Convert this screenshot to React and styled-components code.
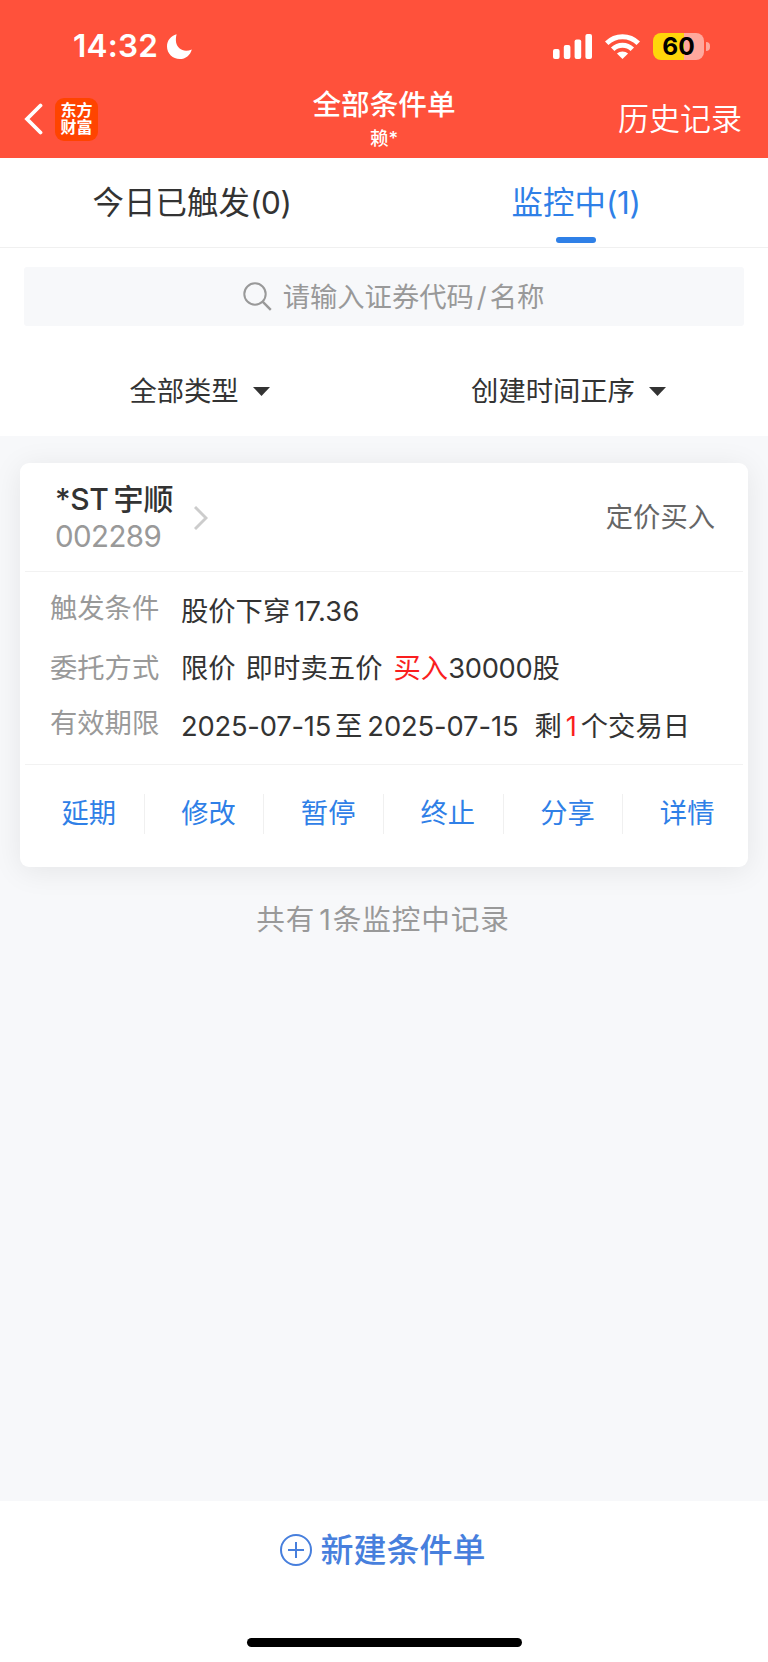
import React from 'react';
import styled, { createGlobalStyle } from 'styled-components';

const GlobalStyle = createGlobalStyle`
  * { box-sizing: border-box; }
  body {
    margin: 0;
    background: #fff;
    color: #333;
    font-family: Inter, "Noto Sans CJK SC", sans-serif;
  }
`;

const Screen = styled.div`
  width: 768px;
  height: 1662px;
  display: flex;
  flex-direction: column;
  white-space: nowrap;
  overflow: hidden;
`;

const Header = styled.header`
  height: 158px;
  background: #ff513b;
  color: #fff;
  display: flex;
  flex-direction: column;
`;

const StatusBar = styled.div`
  height: 80px;
  padding: 12px 58px 0 73px;
  display: flex;
  align-items: center;
  justify-content: space-between;
`;

const StatusGroup = styled.div`
  display: flex;
  align-items: center;
  gap: ${(p) => p.$gap}px;
`;

const Clock = styled.span`
  font-size: 31.5px;
  line-height: 40px;
  font-weight: 600;
  letter-spacing: 0.2px;
`;

const Battery = styled.div`
  display: flex;
  align-items: center;
  gap: 2px;
`;

const BatteryBody = styled.div`
  width: 51px;
  height: 27px;
  border-radius: 8px;
  background: linear-gradient(90deg, #ffd60a 0 60%, #ffa89d 60% 100%);
  color: #000;
  font-size: 24.5px;
  font-weight: 700;
  line-height: 26px;
  text-align: center;
`;

const BatteryTip = styled.div`
  width: 4px;
  height: 9px;
  border-radius: 0 5px 5px 0;
  background: #ffa89d;
`;

const NavBar = styled.div`
  height: 78px;
  display: grid;
  grid-template-columns: 1fr 200px 1fr;
  padding: 0 24px;
`;

const NavLeft = styled.div`
  height: 78px;
  display: flex;
  align-items: center;
  gap: 12px;
`;

const AppBadge = styled.div`
  width: 43px;
  height: 43px;
  border-radius: 9px;
  background: #ff4400;
  display: flex;
  flex-direction: column;
  align-items: center;
  justify-content: center;
  font-size: 16px;
  line-height: 17.5px;
  font-weight: 700;
`;

const NavTitle = styled.div`
  text-align: center;
`;

const Title = styled.h1`
  margin: 6px 0 0;
  font-size: 28.6px;
  font-weight: 500;
  line-height: 38px;
`;

const Account = styled.div`
  font-size: 18.5px;
  font-weight: 500;
  line-height: 24px;
  margin-top: 2px;
`;

const HistoryLink = styled.div`
  height: 78px;
  padding-right: 2px;
  line-height: 77px;
  text-align: right;
  font-size: 31px;
  font-weight: 350;
`;

const Tabs = styled.nav`
  height: 90px;
  border-bottom: 1px solid #f0f0f0;
  display: grid;
  grid-template-columns: 1fr 1fr;
`;

const Tab = styled.div`
  display: flex;
  flex-direction: column;
  align-items: center;
  padding-top: 23px;
  font-size: 31.4px;
  line-height: 44px;
  letter-spacing: 0.1px;
  color: ${(p) => (p.$active ? '#2f80e7' : '#333')};
`;

const TabCount = styled.span`
  letter-spacing: -0.4px;
`;

const TabMark = styled.div`
  width: 40px;
  height: 6px;
  margin-top: 12px;
  border-radius: 3px;
  background: #2f80e7;
`;

const SearchBox = styled.div`
  height: 59px;
  margin: 19px 24px 0;
  padding-left: 19px;
  border-radius: 3px;
  background: #f7f8fa;
  color: #999;
  display: flex;
  align-items: center;
  justify-content: center;
  gap: 11px;
  font-size: 27.3px;
`;

const Placeholder = styled.span`
  padding-bottom: 3px;
`;

const Filters = styled.div`
  height: 110px;
  display: grid;
  grid-template-columns: 1fr 1fr;
  padding-bottom: 20px;
`;

const Filter = styled.div`
  display: flex;
  align-items: flex-end;
  justify-content: center;
  gap: 14px;
  padding: 0 ${(p) => p.$right}px 0 ${(p) => p.$left}px;
  font-size: 27.3px;
  line-height: 48px;
  svg { margin-bottom: 20px; }
`;

const List = styled.main`
  height: 1065px;
  padding-top: 27px;
  background: #f7f8fa;
`;

const Card = styled.article`
  height: 404px;
  margin: 0 20px;
  padding: 0 5px;
  border-radius: 9px;
  background: #fff;
  box-shadow: 0 4px 30px rgba(0, 0, 0, 0.08);
`;

const CardHead = styled.div`
  height: 109px;
  padding: 2px 28px 0 30px;
  border-bottom: 1px solid #f2f2f2;
  display: flex;
  align-items: center;
`;

const Stock = styled.div`
  margin-right: 21px;
`;

const StockName = styled.div`
  font-size: 30px;
  font-weight: 500;
  line-height: 38px;
  letter-spacing: -0.4px;
  margin-top: -3px;
`;

const StockCode = styled.div`
  font-size: 29.5px;
  line-height: 36px;
  letter-spacing: -0.6px;
  color: #999;
`;

const OrderType = styled.div`
  margin-left: auto;
  font-size: 27.3px;
  color: #666;
  line-height: 40px;
`;

const Details = styled.div`
  height: 193px;
  padding: 17px 25px 0;
  border-bottom: 1px solid #f2f2f2;
`;

const Detail = styled.div`
  height: ${(p) => p.$height}px;
  display: flex;
  font-size: 27.3px;
  line-height: 40px;
`;

const Label = styled.div`
  width: 131px;
  color: #999;
`;

const Value = styled.div`
  padding-top: ${(p) => p.$drop || 0}px;
`;

const Num = styled.span`
  margin-left: ${(p) => p.$before || 0}px;
  margin-right: ${(p) => p.$after || 0}px;
  letter-spacing: ${(p) => p.$track || 0}px;
`;

const Red = styled.span`
  color: #fa1e1e;
  margin-left: ${(p) => p.$before || 0}px;
  margin-right: ${(p) => p.$after || 0}px;
`;

const Actions = styled.div`
  display: grid;
  grid-template-columns: repeat(6, 1fr);
  padding-top: 29px;
`;

const Action = styled.div`
  height: 40px;
  padding-left: 9px;
  border-right: 1px solid ${(p) => (p.$last ? 'transparent' : '#f0f0f0')};
  text-align: center;
  font-size: 27.3px;
  line-height: 40px;
  color: #2f80e7;
`;

const Summary = styled.div`
  margin-top: 33px;
  padding-right: 2px;
  line-height: 40px;
  text-align: center;
  font-size: 28.6px;
  letter-spacing: 0.9px;
  color: #999;
`;

const Footer = styled.footer`
  flex: 1;
  background: #fff;
  display: flex;
  flex-direction: column;
  align-items: center;
`;

const CreateButton = styled.div`
  height: 50px;
  margin: 24px 0 63px;
  padding-right: 3px;
  display: flex;
  align-items: center;
  gap: 9px;
  color: #477fdd;
  font-size: 33px;
  font-weight: 500;
`;

const CreateText = styled.span`
  padding-bottom: 5px;
`;

const HomeIndicator = styled.div`
  width: 275px;
  height: 9px;
  border-radius: 5px;
  background: #000;
`;

const Moon = () => (
  <svg width="25" height="25" viewBox="0 0 25 25" fill="#fff">
    <path d="M9.6 0.3C8 6.8 9.2 11.5 12.4 14.3C15.6 17 20 17.4 24.8 15.4C23.3 21.2 18.6 25 12.8 25C5.8 25 0 19.4 0 12.4C0 6.6 3.9 1.8 9.6 0.3Z" />
  </svg>
);

const Signal = () => (
  <svg width="39" height="25" viewBox="0 0 39 25" fill="#fff">
    <rect x="0" y="15" width="6.6" height="10" rx="2" />
    <rect x="10.8" y="11" width="6.6" height="14" rx="2" />
    <rect x="21.6" y="5.5" width="6.6" height="19.5" rx="2" />
    <rect x="32.4" y="0" width="6.6" height="25" rx="2" />
  </svg>
);

const Wifi = () => (
  <svg width="35" height="25" viewBox="0 0 35 25" fill="none" stroke="#fff" strokeWidth="5">
    <path d="M1.7 9.3C10.5 0.5 24.5 0.5 33.3 9.3" />
    <path d="M7.7 15.3C13.2 10 21.8 10 27.3 15.3" />
    <path d="M17.5 25L11.9 19.5C15 16.7 20 16.7 23.1 19.5Z" fill="#fff" stroke="none" />
  </svg>
);

const BackIcon = () => (
  <svg width="19" height="32" viewBox="0 0 19 32" fill="none" stroke="#fff" strokeWidth="3.8" strokeLinecap="round">
    <path d="M16.5 2.5L3 16L16.5 29.5" strokeLinejoin="miter" />
  </svg>
);

const SearchIcon = () => (
  <svg width="29" height="29" viewBox="0 0 29 29" fill="none" stroke="#999" strokeWidth="2">
    <circle cx="12" cy="12" r="10.7" />
    <path d="M19.6 19.6L27.8 27.8" strokeWidth="2.4" />
  </svg>
);

const Caret = () => (
  <svg width="17" height="9" viewBox="0 0 17 9" fill="#333">
    <path d="M0 0H17L8.5 9Z" />
  </svg>
);

const ChevronIcon = () => (
  <svg width="14" height="24" viewBox="0 0 14 24" fill="none" stroke="#ccc" strokeWidth="2.9">
    <path d="M1 1L12 12L1 23" />
  </svg>
);

const PlusIcon = () => (
  <svg width="32" height="32" viewBox="0 0 32 32" fill="none" stroke="#477fdd" strokeWidth="2">
    <circle cx="16" cy="16" r="15" />
    <path d="M8 16H24M16 8V24" />
  </svg>
);

const actions = ['延期', '修改', '暂停', '终止', '分享', '详情'];

export default function App() {
  return (
    <Screen>
      <GlobalStyle />
      <Header>
        <StatusBar>
          <StatusGroup $gap={9}>
            <Clock>14:32</Clock>
            <Moon />
          </StatusGroup>
          <StatusGroup $gap={13}>
            <Signal />
            <Wifi />
            <Battery>
              <BatteryBody>60</BatteryBody>
              <BatteryTip />
            </Battery>
          </StatusGroup>
        </StatusBar>
        <NavBar>
          <NavLeft>
            <BackIcon />
            <AppBadge>
              <span>东方</span>
              <span>财富</span>
            </AppBadge>
          </NavLeft>
          <NavTitle>
            <Title>全部条件单</Title>
            <Account>赖*</Account>
          </NavTitle>
          <HistoryLink>历史记录</HistoryLink>
        </NavBar>
      </Header>

      <Tabs>
        <Tab>
          <span>今日已触发<TabCount>(0)</TabCount></span>
        </Tab>
        <Tab $active>
          <span>监控中<TabCount>(1)</TabCount></span>
          <TabMark />
        </Tab>
      </Tabs>

      <SearchBox>
        <SearchIcon />
        <Placeholder>
          请输入证券代码<Num $before={3} $after={3}>/</Num>名称
        </Placeholder>
      </SearchBox>

      <Filters>
        <Filter $left={15} $right={0}>
          <span>全部类型</span>
          <Caret />
        </Filter>
        <Filter $left={0} $right={15}>
          <span>创建时间正序</span>
          <Caret />
        </Filter>
      </Filters>

      <List>
        <Card>
          <CardHead>
            <Stock>
              <StockName>*ST<Num $before={5}>宇顺</Num></StockName>
              <StockCode>002289</StockCode>
            </Stock>
            <ChevronIcon />
            <OrderType>定价买入</OrderType>
          </CardHead>
          <Details>
            <Detail $height={60}>
              <Label>触发条件</Label>
              <Value $drop={3}>股价下穿<Num $before={4} $track={0.3}>17.36</Num></Value>
            </Detail>
            <Detail $height={55}>
              <Label>委托方式</Label>
              <Value>
                限价<Num $before={10} $track={0.1}>即时卖五价</Num>
                <Red $before={11}>买入</Red>
                <Num $track={-0.3}>30000</Num>股
              </Value>
            </Detail>
            <Detail $height={50}>
              <Label>有效期限</Label>
              <Value $drop={3}>
                <Num $after={4} $track={-0.2}>2025-07-15</Num>至
                <Num $before={5} $after={16} $track={-0.1}>2025-07-15</Num>
                剩<Red $before={4} $after={4}>1</Red>个交易日
              </Value>
            </Detail>
          </Details>
          <Actions>
            {actions.map((name, i) => (
              <Action key={name} $last={i === actions.length - 1}>{name}</Action>
            ))}
          </Actions>
        </Card>
        <Summary>
          共有<Num $before={4} $after={2}>1</Num>条监控中记录
        </Summary>
      </List>

      <Footer>
        <CreateButton>
          <PlusIcon />
          <CreateText>新建条件单</CreateText>
        </CreateButton>
        <HomeIndicator />
      </Footer>
    </Screen>
  );
}
